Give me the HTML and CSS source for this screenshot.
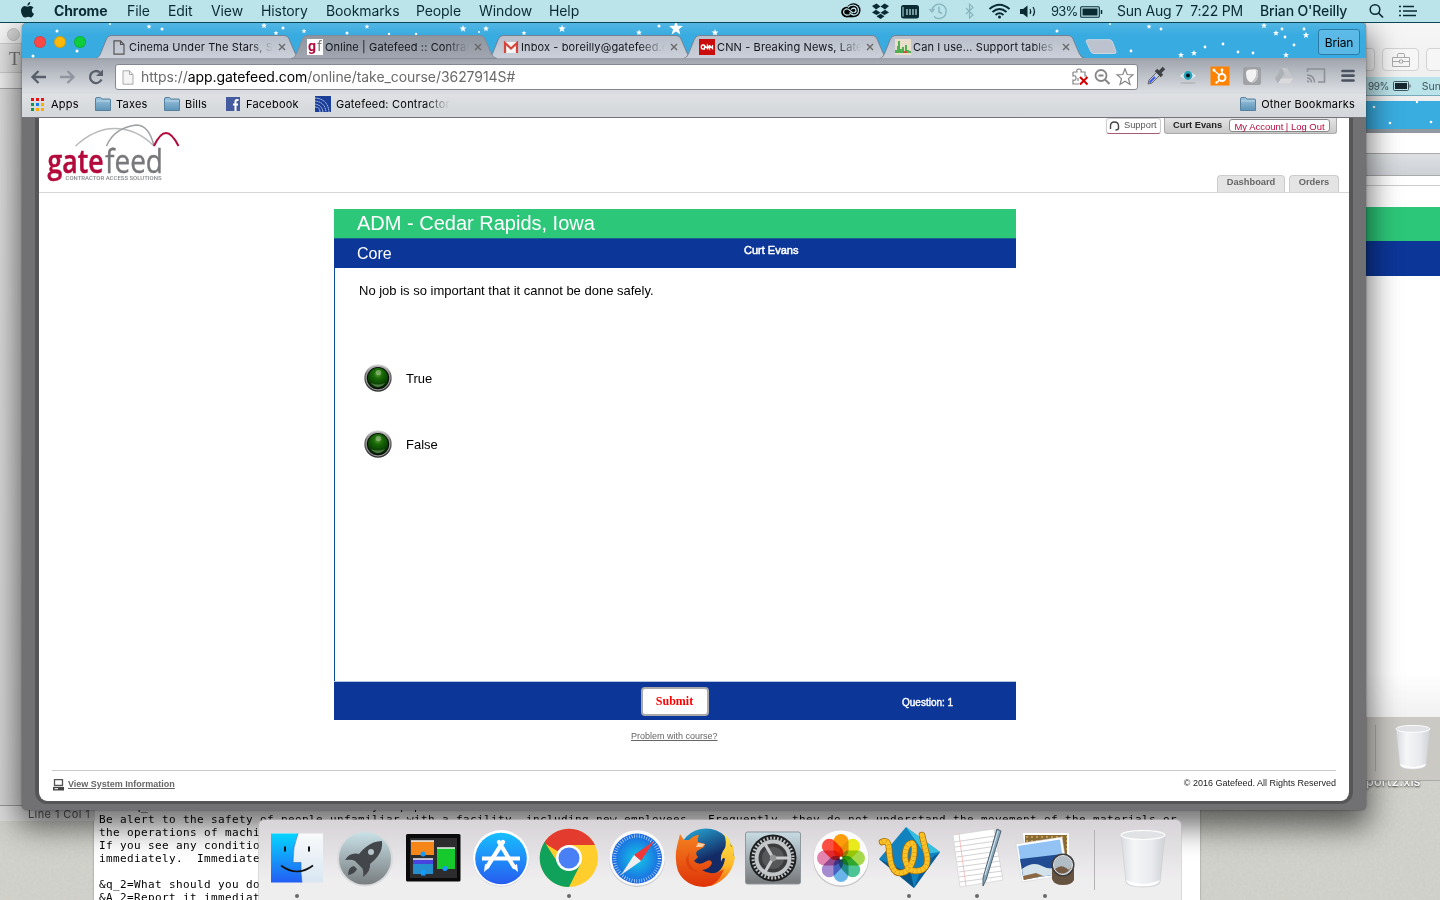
FILE: index.html
```html
<!DOCTYPE html>
<html lang="en">
<head>
<meta charset="utf-8">
<title>Online | Gatefeed :: Contractor Access Solutions</title>
<link rel="stylesheet" href="styles.css">
</head>
<body>
<svg width="0" height="0" class="defs">
  <defs>
    <path id="star" d="M0-5 1.3-1.6 5-1.4 2.1.9 3.1 4.6 0 2.5-3.1 4.6-2.1.9-5-1.4-1.3-1.6Z" fill="#fff"/>
    <linearGradient id="tabg" x2="0" y2="1"><stop stop-color="#b9bfca"/><stop offset="1" stop-color="#cbd0da"/></linearGradient>
    <linearGradient id="taba" x2="0" y2="1"><stop stop-color="#8f959f"/><stop offset="1" stop-color="#a1a6b0"/></linearGradient>
    <linearGradient id="fold" x2="0" y2="1"><stop stop-color="#9fc5dd"/><stop offset="1" stop-color="#5d94b8"/></linearGradient>
    <linearGradient id="cup" x2="1" y2="0"><stop stop-color="#d9dce0"/><stop offset=".3" stop-color="#f5f6f8"/><stop offset=".7" stop-color="#e8eaed"/><stop offset="1" stop-color="#cfd2d6"/></linearGradient>
    <linearGradient id="ring" x2="0" y2="1"><stop stop-color="#e2e2e2"/><stop offset=".35" stop-color="#6c6c6c"/><stop offset="1" stop-color="#303431"/></linearGradient>
    <radialGradient id="led" cx=".5" cy=".3" r=".7"><stop stop-color="#5fa03f"/><stop offset=".3" stop-color="#1b6d08"/><stop offset=".7" stop-color="#0b4603"/><stop offset="1" stop-color="#042600"/></radialGradient>
    <filter id="grain"><feTurbulence type="fractalNoise" baseFrequency=".35" numOctaves="3" seed="4"/><feColorMatrix values="0 0 0 0 .35 0 0 0 0 .34 0 0 0 0 .3 .5 0 0 0 -.12"/></filter>
    <symbol id="tab" viewBox="0 0 210 24"><path d="M0 23.500C4 23 5 20 7 15L11 5Q12.500.5 16 .5H189Q193 .5 194.500 5L200 18Q202 23 206 23.500Z"/></symbol>
    <symbol id="folder" viewBox="0 0 16 14"><path d="M.5 2Q.5.5 2 .5H5.500L7 2H14.500Q15.500 2 15.500 3V13.500H.5Z" fill="url(#fold)" stroke="#55819f"/><path d="M1 4H15" stroke="#b8d6e8"/></symbol>
    <symbol id="x" viewBox="0 0 8 8"><path d="M1 1 7 7M7 1 1 7" stroke="#666" stroke-width="1.300"/></symbol>
    <symbol id="doc" viewBox="0 0 12 15"><path d="M1 .8H7.500L11 4.500V14.200H1ZM7.500.8V4.500H11" fill="none" stroke="#555" stroke-width="1.200"/></symbol>
    <symbol id="bin" viewBox="0 0 46 58"><path d="M1 4 6 52Q7 57 23 57T40 52L45 4Z" fill="url(#cup)" stroke="#c7c9cd" stroke-width=".6"/><path d="M6 50Q8 56 23 56T40 50Q30 54 23 54T6 50Z" fill="#fff"/><ellipse cx="23" cy="5" rx="22" ry="4.500" fill="#e0e2e5" stroke="#fff" stroke-width="1.200"/></symbol>
    <symbol id="ledbtn" viewBox="0 0 28 28"><circle cx="14" cy="14" r="13.700" fill="url(#ring)"/><circle cx="14" cy="14" r="12" fill="none" stroke="#a5a5a5" stroke-width=".9"/><circle cx="14" cy="14" r="11" fill="#020802"/><circle cx="14" cy="14" r="10.200" fill="url(#led)"/><path d="M7 19Q14 22 21 19Q18 23 14 23T7 19Z" fill="#5f8557" opacity=".8"/><circle cx="14.500" cy="8.500" r="2.800" fill="#c2d8b8" opacity=".4"/></symbol>
  </defs>
</svg>

<div class="desktop">
  <svg class="texture" width="1440" height="900"><rect width="1440" height="900" filter="url(#grain)"/></svg>

  <div class="textwin"><pre>     q_                                y   p p
Be alert to the safety of people unfamiliar with a facility, including new employees.  Frequently, they do not understand the movement of the materials or
the operations of machi
If you see any conditio
immediately.  Immediate

&amp;q_2=What should you do
&amp;A_2=Report it immediat</pre></div>

  <div class="leftwin">
    <div class="lw-title"><i></i></div>
    <div class="lw-tools">T</div>
    <div class="lw-rule"></div>
    <div class="lw-body"></div>
    <div class="lw-status">Line 1 Col 1</div>
  </div>

  <div class="filelabel">port2.xls</div>
  <div class="rightwin">
    <div class="rw-tools"><span class="rw-btn cut"></span><span class="rw-btn"><svg width="18" height="14" viewBox="0 0 18 14" fill="none" stroke="#aaa"><path d="M.5 4.500H17.500V13.500H.5ZM5.500 4V1.500Q5.500.5 7 .5H11Q12.500.5 12.500 1.500V4M.5 8.500H7M11 8.500H17.500M7.500 7H10.500V10H7.500Z"/></svg></span><span class="rw-btn"></span></div>
    <div class="rw-menu"><span>99%</span><svg width="18" height="10" viewBox="0 0 18 10"><rect x=".5" y=".5" width="15" height="9" rx="1" fill="none" stroke="#41565c"/><path d="M2 2H14V8H2Z" fill="#182a30"/><path d="M17 3.500V6.500" stroke="#41565c"/></svg><span>Sun</span></div>
    <div class="rw-gap"></div>
    <div class="rw-sky"><svg width="74" height="27"><g fill="#fff"><circle cx="8" cy="6" r="1.300"/><circle cx="24" cy="22" r="1.300"/><circle cx="65" cy="21" r="1.300"/><circle cx="51" cy="1" r="1.200"/></g></svg></div>
    <div class="rw-white"></div>
    <div class="rw-grey"></div>
    <div class="rw-line"></div>
    <div class="rw-space"></div>
    <div class="rw-green"></div>
    <div class="rw-blue"></div>
    <div class="rw-page"></div>
    <div class="rw-dock"><i></i><svg width="36" height="45"><use href="#bin"/></svg></div>
  </div>

  <main class="browser">
    <div class="titlebar">
      <svg class="sky" width="1344" height="35">
        <g><use href="#star" transform="translate(127,3.500) scale(.5)"/><use href="#star" transform="translate(242,2.500) scale(.6)"/><use href="#star" transform="translate(254,10) scale(.5)"/><use href="#star" transform="translate(282,8) scale(.5)"/><use href="#star" transform="translate(345,3.500) scale(.5)"/><use href="#star" transform="translate(441,5.500) scale(.7)"/><use href="#star" transform="translate(464,5.500) scale(.6)"/><use href="#star" transform="translate(502,10) scale(.5)"/><use href="#star" transform="translate(540,5.500) scale(.75)"/><use href="#star" transform="translate(617,9.500) scale(.6)"/><use href="#star" transform="translate(654,5) scale(1.400)"/><use href="#star" transform="translate(693,9.500) scale(.7)"/><use href="#star" transform="translate(1127,3.500) scale(.5)"/><use href="#star" transform="translate(1159,32) scale(.6)"/><use href="#star" transform="translate(1172,30) scale(.6)"/><use href="#star" transform="translate(1242,2.500) scale(.6)"/><use href="#star" transform="translate(1254,10) scale(.6)"/><use href="#star" transform="translate(1264,32) scale(.6)"/><use href="#star" transform="translate(1284,12) scale(.65)"/></g>
        <g fill="#fff"><circle cx="35" cy="8" r="1.500"/><circle cx="11" cy="33" r="1.500"/><circle cx="55" cy="28" r="1.500"/><circle cx="88" cy="1" r="1"/><circle cx="140" cy="6" r="1.500"/><circle cx="261" cy="5" r="1.500"/><circle cx="325" cy="10" r="1.500"/><circle cx="367" cy="11" r="1.200"/><circle cx="394" cy="11" r="1.200"/><circle cx="457" cy="9" r="1"/><circle cx="637" cy="3" r="1.500"/><circle cx="1035" cy="8" r="1.500"/><circle cx="1088" cy="1" r="1"/><circle cx="1139" cy="6" r="1.400"/><circle cx="1109" cy="28" r="1.400"/><circle cx="1183" cy="24" r="1.400"/><circle cx="1201" cy="21" r="1.400"/><circle cx="1216" cy="29" r="1.400"/><circle cx="1231" cy="30" r="1.400"/><circle cx="1260" cy="6" r="1.400"/><circle cx="1263" cy="14" r="1.400"/><circle cx="1272" cy="22" r="1.400"/><circle cx="1282" cy="6" r="1.400"/></g>
      </svg>
      <div class="lights"><i class="red"></i><i class="yellow"></i><i class="green"></i></div>
      <div class="tabs">
        <div class="tab"><svg class="shape"><use href="#tab"/></svg><svg class="fav" width="16" height="15" viewBox="0 0 16 15"><use href="#doc" width="12" height="15" x="2"/></svg><span>Cinema Under The Stars, S</span><svg class="cl"><use href="#x"/></svg></div>
        <div class="tab active"><svg class="shape"><use href="#tab"/></svg><svg class="fav" width="16" height="16"><path d="M0 0H16V16H0Z" fill="#fff"/><text x="1" y="12" font-size="14" font-weight="700" fill="#b3093b">g</text><text x="10" y="12" font-size="14" fill="#777">f</text></svg><span>Online | Gatefeed :: Contrac</span><svg class="cl"><use href="#x"/></svg></div>
        <div class="tab"><svg class="shape"><use href="#tab"/></svg><svg class="fav" width="16" height="16"><path d="M1 3H15V14H1Z" fill="#f4f4f4"/><path d="M2 14V4L8 9.500 14 4V14" fill="none" stroke="#d54539" stroke-width="2.200"/></svg><span>Inbox - boreilly@gatefeed.c</span><svg class="cl"><use href="#x"/></svg></div>
        <div class="tab"><svg class="shape"><use href="#tab"/></svg><svg class="fav" width="16" height="16"><path d="M0 0H16V16H0Z" fill="#cb0c0c"/><path d="M5.500 6H4Q2.300 6 2.300 8T4 10H5.500V6.500L8.500 9.500V6.500L10.500 9.500V6M10.500 6.500 13.500 9.500V6" fill="none" stroke="#fff" stroke-width="1.300"/></svg><span>CNN - Breaking News, Late</span><svg class="cl"><use href="#x"/></svg></div>
        <div class="tab"><svg class="shape"><use href="#tab"/></svg><svg class="fav" width="16" height="16"><path d="M0 0H16V16H0Z" fill="#e9dfcc"/><path d="M0 14V11H2V7H3V2H5V10H7V8H9V12H10V6H12V11H14V12H16V14Z" fill="#4fb052"/><path d="M8 12H12V14H8Z" fill="#c0563c"/></svg><span>Can I use... Support tables</span><svg class="cl"><use href="#x"/></svg></div>
      </div>
      <svg class="newtab" width="32" height="16"><path d="M3 .7H24Q26.500.7 27.500 3L31 12.500Q31.500 14.500 29.500 14.500H9Q6.500 14.500 5.500 12L1.200 2.500Q.8.7 3 .7Z" fill="#bcc3ce" stroke="#ccd5df"/></svg>
      <div class="profile">Brian</div>
    </div>
    <div class="toolbar">
      <svg class="nav" width="82" height="18" viewBox="0 0 82 18" fill="none" stroke-width="2.300"><path d="M16 9H3M8.500 3 2.500 9 8.500 15" stroke="#59606c"/><path d="M30 9H43M37.500 3 43.500 9 37.500 15" stroke="#90969f"/><path d="M70 4.500A6 6 0 1 0 71.500 11.500" stroke="#59606c"/><path d="M73 1.500V8H66Z" fill="#59606c"/></svg>
      <div class="omnibox">
        <svg width="12" height="15" viewBox="0 0 12 15"><path d="M1 .8H7.500L11 4.500V14.200H1ZM7.500.8V4.500H11" fill="#f5f5f5" stroke="#aaa"/></svg>
        <span class="url"><span>https://</span><b>app.gatefeed.com</b><span>/online/take_course/3627914S#</span></span>
        <svg class="omni" width="62" height="18" viewBox="0 0 62 18" fill="none" stroke="#858585" stroke-width="1.200"><path d="M1 4H5Q4 1 7 1T9 4H13V8H15M1 4V8Q4 7 4 10T1 12V16H7M6 10V13"/><path d="M8 9 15.500 16.500M15.500 9 8 16.500" stroke="#d40000" stroke-width="2"/><circle cx="29" cy="7.500" r="5.500" stroke-width="1.800"/><path d="M33 11.500 37.500 16M26.500 7.500H31.500" stroke-width="2"/><path d="M53 .8 55.200 6.500 61 6.800 56.500 10.600 58 16.500 53 13.200 48 16.500 49.500 10.600 45 6.800 50.800 6.500Z"/></svg>
      </div>
      <div class="exts">
        <svg width="20" height="20" viewBox="0 0 20 20"><path d="M2 18 3 14 11 6 14 9 6 17Z" fill="#c5cede" stroke="#666"/><path d="M3.500 16.500 9 11" stroke="#3c59e8" stroke-width="2"/><path d="M10 4 16 10M13 7 18 2" stroke="#3e4146" stroke-width="3.500"/></svg>
        <svg width="20" height="20" viewBox="0 0 20 20"><path d="M2 10Q10 2 18 10Q10 17 2 10Z" fill="#dfe8ec"/><circle cx="10" cy="9.500" r="4.400" fill="#26a5ba"/><circle cx="10" cy="9.500" r="2" fill="#071017"/><ellipse cx="10" cy="17" rx="8" ry="1" fill="#aaa" opacity=".6"/></svg>
        <svg width="20" height="20" viewBox="0 0 20 20"><path d="M.5.5H19.500V19.500H.5Z" fill="#ff8200"/><circle cx="12" cy="11.500" r="3.500" fill="none" stroke="#fff" stroke-width="2"/><path d="M9.500 9 4 4.500M12 8V4M9.500 14 7 16.500" stroke="#fff" stroke-width="1.500"/><circle cx="4" cy="4" r="1.500" fill="#fff"/><circle cx="12" cy="4" r="1.400" fill="#fff"/><circle cx="6.500" cy="16.500" r="1.200" fill="#fff"/></svg>
        <svg width="20" height="20" viewBox="0 0 20 20"><rect x="1" y="1" width="18" height="18" rx="2" fill="#a0a2a5"/><path d="M4 7Q4 3 10 3.500 16 2 16 7 16 16 10 16.500 4 16 4 7Z" fill="#f3f3f3"/><path d="M14 4Q16 11 9 16.500 17 16 16 6Z" fill="#c2c2c2"/></svg>
        <svg width="20" height="20" viewBox="0 0 20 20"><path d="M7.500 2H13L19 12.500H13Z" fill="#c4c6c9"/><path d="M7.500 2 1 12.500 4 17.500 10.500 7Z" fill="#adb0b4"/><path d="M7 12.500H19L16 17.500H4Z" fill="#d9dadb"/></svg>
        <svg width="20" height="20" viewBox="0 0 20 20" fill="none" stroke="#8d9095" stroke-width="1.600"><path d="M1.500 6V3H18.500V16H12M1 9Q8 9 8.500 16.500M1 12Q5 12 5.500 16.500M1 15Q2.500 15 2.500 16.500"/></svg>
        <svg width="20" height="20" viewBox="0 0 20 20"><path d="M4.500 5H15.500M4.500 9.700H15.500M4.500 14.500H15.500" stroke="#4a5260" stroke-width="2.700" stroke-linecap="round"/></svg>
      </div>
    </div>
    <div class="bookmarks">
      <div class="bm apps"><svg width="13" height="13"><g><path d="M0 0H3V3H0ZM5 0H8V3H5ZM10 0H13V3H10Z" fill="#f00d0d"/><path d="M0 5H3V8H0ZM0 10H3V13H0Z" fill="#11994b"/><path d="M5 5H8V8H5Z" fill="#157cea"/><path d="M10 5H13V8H10ZM5 10H8V13H5ZM10 10H13V13H10Z" fill="#ffac00"/></g></svg><span>Apps</span></div>
      <div class="bm taxes"><svg width="16" height="14"><use href="#folder"/></svg><span>Taxes</span></div>
      <div class="bm bills"><svg width="16" height="14"><use href="#folder"/></svg><span>Bills</span></div>
      <div class="bm fb"><svg width="14" height="14"><path d="M0 0H14V14H0Z" fill="#455ba0"/><path d="M12.500 3H11Q9.500 3 9.500 4.700V14M7 7.500H12" stroke="#fff" stroke-width="2" fill="none"/></svg><span>Facebook</span></div>
      <div class="bm gf"><svg width="16" height="16"><path d="M0 0H16V16H0Z" fill="#1b3f99"/><g fill="none" stroke="#c5d3ef" stroke-dasharray="1.500 .6"><path d="M0 2Q13 3 14 16M0 5Q10 6 11 16M0 8Q7 9 8 16M0 11Q5 11 5 16"/></g></svg><span>Gatefeed: Contractor</span></div>
      <div class="bm other"><svg width="16" height="14"><use href="#folder"/></svg><span>Other Bookmarks</span></div>
    </div>
    <div class="frame">
      <div class="page">
        <header class="site">
          <svg class="logo" width="136" height="62" viewBox="0 0 136 62"><g fill="none" stroke-width="1.500"><path d="M27.500 27Q47 9 68 9.500T106 27" stroke="#b9babc"/><path d="M58.500 27Q66 9 88 6 101 6 106 27" stroke="#9fa1a4"/><path d="M106 27Q112 14 118 14T130.500 27" stroke="#b3093b" stroke-width="2"/></g><text class="lg" x="-.5" y="54" textLength="56" lengthAdjust="spacingAndGlyphs" fill="#b3093b">gate</text><text class="lf" x="57" y="54" textLength="58" lengthAdjust="spacingAndGlyphs" fill="#77787b">feed</text><text class="ls" x="17.500" y="61.300" textLength="96" lengthAdjust="spacingAndGlyphs" fill="#88898b">CONTRACTOR ACCESS SOLUTIONS</text></svg>
          <div class="siteright">
            <div class="account">
              <div class="support"><svg width="11" height="10" viewBox="0 0 11 10"><path d="M1.500 7V5Q1.500 1 5.500 1T9.500 5V7Q9.500 9 6.500 9M1.500 5V8M9.500 5V8" fill="none" stroke="#444" stroke-width="1.400"/></svg><span>Support</span></div>
              <div class="user"><b>Curt Evans</b><span class="links">My Account | Log Out</span></div>
            </div>
            <nav class="sitenav"><span>Dashboard</span><span>Orders</span></nav>
          </div>
        </header>
        <section class="course">
          <h1>ADM - Cedar Rapids, Iowa</h1>
          <div class="lesson"><h2>Core</h2><span>Curt Evans</span></div>
          <div class="question">
            <p>No job is so important that it cannot be done safely.</p>
            <div class="answer"><svg width="28" height="28"><use href="#ledbtn"/></svg><span>True</span></div>
            <div class="answer"><svg width="28" height="28"><use href="#ledbtn"/></svg><span>False</span></div>
          </div>
          <div class="actions"><button>Submit</button><span>Question: 1</span></div>
        </section>
        <div class="problem"><a>Problem with course?</a></div>
        <footer><span class="sys"><svg width="11" height="12" viewBox="0 0 11 12"><path d="M1.500.7H9.500V6.500H1.500Z" fill="none" stroke="#555" stroke-width="1.300"/><path d="M0 8H11V11.500H0Z" fill="#444"/><path d="M1.500 9.700H5" stroke="#fff"/></svg><a>View System Information</a></span><span class="copy">© 2016 Gatefeed. All Rights Reserved</span></footer>
      </div>
    </div>
  </main>

  <div class="menubar">
    <svg class="apple" width="15" height="16" viewBox="0 0 15 16"><path d="M10.200 0Q10.400 2.800 7.400 3.700 7.200 1 10.200 0ZM7.500 4.700Q8.500 4.600 9.500 4.100 12 3.600 13.500 5.600 11.500 7 11.800 9T14 11.700Q12.500 15.500 10.600 15.500 9 14.700 7.500 14.900T5 15.500Q3 15.500 1.700 12 .2 8 1.900 5.700 3.500 3.500 5.800 4.300Q6.800 4.700 7.500 4.700Z" fill="#0b2b33"/></svg>
    <div class="menus"><b>Chrome</b><span>File</span><span>Edit</span><span>View</span><span>History</span><span>Bookmarks</span><span>People</span><span>Window</span><span>Help</span></div>
    <div class="status">
      <svg width="265" height="20" viewBox="0 0 265 20" fill="none" stroke="#0b2b33" stroke-width="1.400">
        <g><circle cx="13.500" cy="9.300" r="7" fill="#000" stroke="none"/><circle cx="6.500" cy="11" r="5.300" fill="#000" stroke="none"/><path d="M6 6H13V16.300H6Z" fill="#000" stroke="none"/><g stroke="#bbe3ea" stroke-width="1.300"><path d="M10 13.500Q8 14.500 6 14 3.500 13 3.500 11T6 8Q8 7.500 10 9.500L13 12M8 6.500Q10 4 13.500 4.200 18.500 5 18.500 9.500 18 14 13.500 14 11 13.500 9.500 11.500M11 8.500Q12.500 7 14 7 16 7.500 16 9.500T13.500 11.500"/></g></g>
        <path d="M32 5 36.500 2.500 40.500 5.500 36 8.500ZM49 5 44.500 2.500 40.500 5.500 45 8.500ZM32 11.500 36 8.700 40.500 11.800 36.500 14ZM49 11.500 45 8.700 40.500 11.800 44.500 14ZM36.500 15.300 40.500 12.700 44.500 15.300 40.500 18Z" fill="#0b2b33" stroke="none"/>
        <rect x="61" y="4" width="18" height="13.500" rx="2.500" fill="#0b2b33" stroke="none"/><path d="M63 6V15.500" stroke="#bbe3ea" stroke-width="1"/><path d="M67 8V14M70 8V14M73 8V14M76 8V14" stroke="#bbe3ea" stroke-width="1.200"/>
        <g stroke="#86b4bd"><path d="M92 9A7.200 7.200 0 1 1 94 15.500M89.500 8 92 11 94.500 8M99 5.500V11L102 12.500"/><path d="M126 7 133 14 129.500 17V3L133 6.500 126 13" stroke-width="1.100"/></g>
        <path d="M149.500 8Q159.500-.5 169.500 8M152.500 11Q159.500 5 166.500 11M155.500 14Q159.500 10.500 163.500 14" stroke-width="2"/><circle cx="159.500" cy="16" r="1.500" fill="#0b2b33" stroke="none"/>
        <path d="M180 8H183L187.500 4.500V16.500L183 13H180Z" fill="#0b2b33" stroke="none"/><path d="M190 8Q191.500 10.500 190 13M193 6Q196 10.500 193 15" stroke-width="1.200"/>
        <text x="211" y="15" class="pct">93%</text>
        <rect x="240.700" y="5.700" width="18.600" height="10.600" rx="1" stroke-width="1.100"/><path d="M242.500 7.500H257.500V14.500H242.500Z" fill="#0b2b33" stroke="none"/><path d="M261.500 9V13" stroke-width="1.500"/>
      </svg>
      <span class="clock">Sun Aug 7&nbsp; 7:22 PM</span><span class="name">Brian O'Reilly</span>
      <svg class="srch" width="50" height="16" viewBox="0 0 50 16" fill="none" stroke="#0b2b33"><circle cx="6" cy="6.500" r="4.800" stroke-width="1.500"/><path d="M9.500 10 14 14.500" stroke-width="1.700"/><path d="M34 3.500H45M34 8H48M34 12.500H47" stroke-width="1.600"/><path d="M30 3.500H32M30 8H32M30 12.500H32" stroke-width="1.600"/></svg>
    </div>
  </div>

  <div class="dock">
    <!-- Finder -->
    <svg class="ic" viewBox="0 0 68 80"><defs><linearGradient id="fi" x2="0" y2="1"><stop stop-color="#05d5ff"/><stop offset="1" stop-color="#235ef4"/></linearGradient><linearGradient id="fw" x2="0" y2="1"><stop stop-color="#f9fafb"/><stop offset="1" stop-color="#d8e6f2"/></linearGradient></defs><rect x="8" y="13.500" width="52" height="49" rx="1" fill="url(#fw)"/><path d="M8 13.500H35Q29.500 27 30 42.500H38Q37.500 53 39 62.500H8Z" fill="url(#fi)"/><path d="M35 13.500Q29.500 27 30 42.500H38Q37.500 53 39 62.500" fill="none" stroke="#2c62a8" stroke-width=".6"/><path d="M22 26.500V31.500M46 26.500V31.500" stroke="#111" stroke-width="2"/><path d="M18 45.500Q34 57.500 50 45.500" fill="none" stroke="#111" stroke-width="1.600"/><circle cx="34" cy="76" r="2" fill="#68676a"/></svg>
    <!-- Launchpad -->
    <svg class="ic" viewBox="0 0 68 80"><defs><linearGradient id="lp" x2="0" y2="1"><stop stop-color="#c9e2e9"/><stop offset="1" stop-color="#777b7d"/></linearGradient></defs><circle cx="34" cy="38.500" r="27" fill="url(#lp)" stroke="#d8dadc" stroke-width="2"/><path d="M51 21Q42 21 35 27 31 30 28 34 19 32 14 40 21 39 24 41L31 48Q33 51 32 57 40 51 39 44 44 40 47 36 52 29 51 21Z" fill="#43464a"/><path d="M23 46Q17 47 17 55 24 54 26 49Z" fill="#43464a"/><circle cx="40" cy="32" r="3" fill="#b7c4c9"/></svg>
    <!-- Mission Control -->
    <svg class="ic" viewBox="0 0 68 80"><rect x="7" y="14" width="54.500" height="47.500" rx="1.500" fill="#0a0a0a"/><path d="M11 18H58V58H11Z" fill="#2c2c2e"/><path d="M12 21H35V35H12Z" fill="#f68617"/><path d="M38 28H56V49H38Z" fill="#16c92d"/><path d="M14 39H34V54H14Z" fill="#258fd0"/><path d="M14 39H34V44H14Z" fill="#4644dd"/><path d="M12 21H35M38 28H56M14 39H34" stroke="#eee" stroke-width="1.500"/><g fill="#149bff"><circle cx="24" cy="34" r="2.500"/><circle cx="46" cy="48.500" r="2.500"/><path d="M22 50H26.500V55.500H22Z"/></g></svg>
    <!-- App Store -->
    <svg class="ic" viewBox="0 0 68 80"><defs><linearGradient id="as" x2="0" y2="1"><stop stop-color="#18bfff"/><stop offset="1" stop-color="#275cf0"/></linearGradient></defs><circle cx="34" cy="38.500" r="28" fill="#bfc4cb"/><circle cx="34" cy="38" r="28" fill="#fff"/><circle cx="34" cy="38.500" r="25.800" fill="url(#as)"/><path d="M15 38.500H53" stroke="#fff" stroke-width="4"/><path d="M36 22 20 47M32 22 47 47" stroke="#fff" stroke-width="4.200" stroke-linecap="round"/><path d="M18 44 22.500 47 17 52ZM45 47 50 44 51 52Z" fill="#fff"/></svg>
    <!-- Chrome -->
    <svg class="ic" viewBox="0 0 68 80"><circle cx="34" cy="38" r="29" fill="#ffce2c"/><path d="M34 38 9 23A29 29 0 0 1 60 25H34Z" fill="#e33b2e"/><path d="M9.500 22A29 29 0 0 0 34 67L45 45 34 38 23 43Z" fill="#10a15a"/><circle cx="34" cy="38" r="13" fill="#fff"/><circle cx="34" cy="38" r="10.500" fill="#4a80f5"/><circle cx="34" cy="76" r="2" fill="#68676a"/></svg>
    <!-- Safari -->
    <svg class="ic" viewBox="0 0 68 80"><defs><radialGradient id="sf"><stop stop-color="#13c9e8"/><stop offset="1" stop-color="#1b65df"/></radialGradient></defs><circle cx="34" cy="39" r="28" fill="#c5c7cc"/><circle cx="34" cy="38" r="27.800" fill="#f9f9fa"/><circle cx="34" cy="38.500" r="25" fill="url(#sf)"/><circle cx="34" cy="38.500" r="22.500" fill="none" stroke="#d6eefd" stroke-width="3.500" stroke-dasharray=".6 1.900"/><path d="M51 21 38 41 31 35Z" fill="#f03739"/><path d="M18 55 31 35 38 41Z" fill="#eceef1"/></svg>
    <!-- Firefox -->
    <svg class="ic" viewBox="0 0 68 80"><defs><linearGradient id="ff" x2=".4" y2="1"><stop stop-color="#28b4e0"/><stop offset=".65" stop-color="#142a65"/></linearGradient><linearGradient id="fx" x2="0" y2="1"><stop stop-color="#f58220"/><stop offset="1" stop-color="#df3208"/></linearGradient><linearGradient id="ft" x2="0" y2="1"><stop stop-color="#ffe44a"/><stop offset=".6" stop-color="#fdb92a"/><stop offset="1" stop-color="#f0630e"/></linearGradient></defs><circle cx="35" cy="36" r="27.500" fill="url(#ff)"/><path d="M53 14Q60 19 60 27L62 25Q64 31 62 35L64 37Q61 58 40 66 24 66 24 52 50 61 54 39 52 36 50 42 49 34 54 28 56 22 53 14Z" fill="url(#ft)"/><path d="M6 26 9 14 13 20 18 20Q23 15 28 15 26 19 27 22L34 24 33 27 26 31Q24 34 27 37L23 41Q28 46 34 42T41 43Q39 49 31 50 41 57 53 49 47 66 33 67 14 66 7 51 3 38 6 26Z" fill="url(#fx)"/><path d="M27 23 34 24 31 27 25 27Z" fill="#fbd0a5"/><path d="M19 31Q14 45 27 52 15 51 15 39Z" fill="#d53b0c" opacity=".6"/></svg>
    <!-- System Preferences -->
    <svg class="ic" viewBox="0 0 68 80"><defs><linearGradient id="sp" x2="0" y2="1"><stop stop-color="#c8dce4"/><stop offset="1" stop-color="#77797b"/></linearGradient></defs><rect x="6.500" y="12" width="55" height="52" rx="2" fill="url(#sp)" stroke="#8e979b"/><circle cx="34" cy="38" r="23.500" fill="#1e2022"/><circle cx="34" cy="38" r="20" fill="none" stroke="#c1c4c6" stroke-width="3" stroke-dasharray="1.700 1.790"/><circle cx="34" cy="38" r="16.500" fill="#3a3c3e" stroke="#c3c6c8" stroke-width="4"/><circle cx="34" cy="38" r="11" fill="#555759"/><path d="M34 38H50M34 38 26 24M34 38 26 52" stroke="#c8cacc" stroke-width="3"/><circle cx="34" cy="38" r="3.200" fill="#929597"/></svg>
    <!-- Photos -->
    <svg class="ic" viewBox="0 0 68 80"><circle cx="34" cy="39" r="28" fill="#c6c6c9"/><circle cx="34" cy="38" r="27.500" fill="#fbfbfb"/><g class="petals"><rect x="26.500" y="14" width="15" height="24" rx="7.500" fill="#fe9d0b"/><rect x="26.500" y="14" width="15" height="24" rx="7.500" fill="#e9ea1c" transform="rotate(45 34 38)"/><rect x="26.500" y="14" width="15" height="24" rx="7.500" fill="#a5d84b" transform="rotate(90 34 38)"/><rect x="26.500" y="14" width="15" height="24" rx="7.500" fill="#4cc493" transform="rotate(135 34 38)"/><rect x="26.500" y="14" width="15" height="24" rx="7.500" fill="#69b4e8" transform="rotate(180 34 38)"/><rect x="26.500" y="14" width="15" height="24" rx="7.500" fill="#a58bd0" transform="rotate(225 34 38)"/><rect x="26.500" y="14" width="15" height="24" rx="7.500" fill="#e383b0" transform="rotate(270 34 38)"/><rect x="26.500" y="14" width="15" height="24" rx="7.500" fill="#fb4f43" transform="rotate(315 34 38)"/></g><circle cx="34" cy="38" r="1.500" fill="#fff"/></svg>
    <!-- TextWrangler -->
    <svg class="ic" viewBox="0 0 68 80"><path d="M31 7 65 32 39 68 4 39Z" fill="#1182bd"/><path d="M31 7 65 32 50 34Z" fill="#36c0e0"/><path d="M4 39 39 68 36 54Z" fill="#075487"/><path d="M39 68 65 32 48 44Z" fill="#0b5d9b"/><g fill="none" stroke-linecap="round" stroke-linejoin="round"><path d="M7 22Q13 19 14 28 15 53 25 53 34 53 38 40 41 25 37 23 30 24 30 38 32 52 42 51 54 50 52 36L47 15" stroke="#a56a08" stroke-width="6.500"/><path d="M7 22Q13 19 14 28 15 53 25 53 34 53 38 40 41 25 37 23 30 24 30 38 32 52 42 51 54 50 52 36L47 15" stroke="#fbc226" stroke-width="5"/><path d="M7 22Q13 19 14 28 15 53 25 53 34 53 38 40 41 25 37 23 30 24 30 38 32 52 42 51 54 50 52 36L47 15" stroke="#d99a18" stroke-width="4.500" stroke-linecap="butt" stroke-dasharray=".6 3.400"/></g><circle cx="34" cy="76" r="2" fill="#68676a"/></svg>
    <!-- TextEdit -->
    <svg class="ic" viewBox="0 0 68 80"><path d="M10 15 51 9 60 60 17 67Z" fill="#fff" stroke="#ccc" stroke-width=".6"/><path d="M11 22 52 16M12 27 53 21M13 32 54 26M14 37 55 31M14 42 56 36M15 47 57 41M16 52 58 46M16 57 59 51M17 62 60 56" stroke="#c7c7cc" stroke-width=".8"/><path d="M16 14 23 66" stroke="#f2a9a9" stroke-width=".7"/><path d="M54 9 58 11 43 60 40 66 40 58Z" fill="#8ba9bd" stroke="#4e626f"/><path d="M55 11 42 55" stroke="#dceaf2"/><circle cx="34" cy="76" r="2" fill="#68676a"/></svg>
    <!-- Preview -->
    <svg class="ic" viewBox="0 0 68 80"><path d="M12 13H58V48H16Z" fill="#fff"/><path d="M14 15H56V46H14Z" fill="#8a6a34"/><path d="M15 17H56M15 21H56M50 25H56M50 29H56" stroke="#c39a51" stroke-width="2" stroke-dasharray="2 3"/><path d="M5 24 51 17 57 55 11 62Z" fill="#fff" stroke="#ccc" stroke-width=".5"/><path d="M7 26 49 19.500 54 53 12.500 59.500Z" fill="#93c3f5"/><path d="M9 39 51.500 34 54 53 12.500 59.500Z" fill="#214b93"/><path d="M11 49Q22 41 31 46T53 46L54 53 12.500 59.500Z" fill="#d3e2ea"/><path d="M12 56 25 53 32 56 13 60Z" fill="#8a6843"/><path d="M41 46H63V60Q61 65 52 65T41 59Z" fill="#66533f"/><circle cx="52" cy="45" r="11.500" fill="#3d3d3d"/><circle cx="52" cy="45" r="9.500" fill="#b2bcc5" stroke="#e2e5e8"/><path d="M44 49Q50 44 55 48T60 47Q57 53 52 53.500T44 49Z" fill="#765b44"/><circle cx="34" cy="76" r="2" fill="#68676a"/></svg>
    <i class="dsep"></i>
    <svg class="trash" width="46" height="58"><use href="#bin"/></svg>
  </div>
</div>
</body>
</html>
```
FILE: styles.css
```css
* { box-sizing: border-box; }
body { margin: 0; font-family: "Liberation Sans", Arial, sans-serif; }
svg { display: block; flex: none; }
i { display: block; flex: none; }
.defs { position: absolute; }
.desktop { position: relative; width: 1440px; height: 900px; overflow: hidden; background: #d3d3cd; }
.texture { position: absolute; opacity: .35; }

/* menu bar */
.menubar { position: absolute; left: 0; top: 0; width: 1440px; height: 23px; display: flex; align-items: center; background: #bbe3ea; border-bottom: 1px solid #0b4656; font: 14px/22px Inter, sans-serif; color: #0b2b33; padding-left: 20px; }
.apple { margin-top: -3px; }
.menus { display: grid; grid-template-columns: 73px 41px 43px 50px 65px 90px 63px 70px 50px; margin-left: 19px; letter-spacing: -.1px; }
.menus > * { white-space: nowrap; }
.status { display: flex; align-items: center; position: absolute; left: 840px; top: 0; height: 22px; white-space: nowrap; }
.pct { font: 13px Inter, sans-serif; fill: #0b2b33; stroke: none; letter-spacing: -.8px; }
.clock { width: 143px; margin-left: 12px; letter-spacing: -.22px; }
.name { width: 109px; font-weight: 500; letter-spacing: -.15px; }

/* windows behind */
.leftwin { position: absolute; left: 0; top: 23px; width: 95px; height: 798px; display: flex; flex-direction: column; background: #dcdcdc; }
.lw-title { height: 21px; background: #f5f5f5; border-bottom: 1px solid #d0d0d0; padding: 5px 7px; }
.lw-title i { width: 13px; height: 13px; border-radius: 50%; background: #d5d5d5; border: 1px solid #c3c3c3; }
.lw-tools { height: 29px; background: #e4e4e4; font: 18px/30px "Liberation Serif", serif; color: #777; padding-left: 9px; border-bottom: 1px solid #ccc; }
.lw-rule { height: 16px; background: #f0f0f0; border-bottom: 1px solid #aaa; }
.lw-body { flex: 1; background: linear-gradient(#ddd, #d4d4d4); border-bottom: 1px solid #999; }
.lw-status { height: 15px; background: #ddd; font: 11px/17px Inter, sans-serif; color: #555; padding-left: 28px; letter-spacing: .4px; white-space: nowrap; }
.textwin { position: absolute; left: 94px; top: 790px; width: 1106px; height: 110px; background: #fff; padding: 10px 5px; box-shadow: 0 0 2px #888; overflow: hidden; }
.textwin pre { margin: 0; font: 11px/13px "DejaVu Sans Mono", monospace; letter-spacing: .378px; color: #000; }
.filelabel { position: absolute; left: 1366px; top: 774px; font: 500 12.500px/16px Inter, sans-serif; color: #fff; text-shadow: 0 1px 2px #333; letter-spacing: .2px; }
.rightwin { position: absolute; left: 1366px; top: 23px; width: 74px; height: 758px; background: #fff; display: flex; flex-direction: column; overflow: hidden; }
.rw-tools { height: 54px; background: linear-gradient(#f6f6f6, #f0f0f0); display: flex; gap: 7px; padding-top: 25px; margin-left: -28px; padding-left: 0; flex: none; }
.rw-btn { width: 37px; height: 23px; border: 1px solid #d3d3d3; border-radius: 4px; background: #f6f6f6; flex: none; display: grid; place-items: center; }
.rw-menu { height: 19px; background: #bbe3ea; display: flex; align-items: center; font: 10px/17px Inter, sans-serif; color: #41565c; padding-left: 2px; gap: 4px; border-bottom: 1px solid #7ab; }
.rw-menu span:first-child { letter-spacing: -.5px; }
.rw-menu span:last-child { margin-left: 7px; font-size: 10.500px; }
.rw-gap { height: 5px; background: #efefef; }
.rw-sky { height: 32px; background: #3aade0; border-bottom: 4px solid #9198a0; }
.rw-white { height: 20px; }
.rw-grey { height: 23px; background: linear-gradient(#dde0e3, #ced1d6); border: 1px solid #aaa; border-width: 1px 0; }
.rw-line { height: 10px; border-bottom: 1px solid #ccc; }
.rw-space { height: 21px; }
.rw-green { height: 34px; background: #2dc779; }
.rw-blue { height: 35px; background: #0c3698; }
.rw-page { flex: 1; background: linear-gradient(#fff 90%, #f1f1f1); }
.rw-dock { height: 64px; background: #cbc9c4; display: flex; padding: 8px 0 0 9px; gap: 19px; border-bottom: 1px solid #aaa; }
.rw-dock i { width: 1px; height: 46px; background: #aaa; }

/* browser chrome */
.browser { position: absolute; left: 22px; top: 23px; width: 1344px; height: 787px; border-radius: 5px; box-shadow: 0 13px 30px 4px rgba(0,0,0,.57), 0 0 2px rgba(0,0,0,.5); display: flex; flex-direction: column; background: #717174; }
.titlebar { height: 35px; background: linear-gradient(#52b6e4, #38abe0 35%); border-radius: 5px 5px 0 0; position: relative; display: flex; font: 11px Inter, sans-serif; }
.sky { position: absolute; left: 0; top: 0; overflow: hidden; }
.lights { display: flex; gap: 8px; padding: 13px 0 0 12px; width: 76px; position: relative; }
.lights i { width: 12px; height: 12px; border-radius: 50%; border: 1px solid #0002; }
.red { background: #fc4948; } .yellow { background: #fdb90a; } .green { background: #0fce3e; }
.tabs { display: flex; padding-top: 12px; position: relative; }
.tab { width: 196px; height: 23px; position: relative; display: flex; align-items: center; padding-left: 13px; white-space: nowrap; color: #10141a; }
.shape { position: absolute; left: -3px; top: 0; width: 210px; height: 24px; fill: url(#tabg); stroke: #737c8b; stroke-width: .9; }
.tab.active { z-index: 2; }
.active .shape { fill: url(#taba); stroke: #838994; }
.fav { position: relative; margin-top: 1px; }
.fav text { font-family: Roboto, sans-serif; }
.tab span { position: relative; width: 144px; margin-left: 2px; overflow: hidden; line-height: 18px; letter-spacing: .12px; -webkit-mask-image: linear-gradient(90deg, #000 83%, transparent); mask-image: linear-gradient(90deg, #000 83%, transparent); }
.cl { width: 8px; height: 8px; position: relative; margin-left: 5px; }
.newtab { margin: 16px 0 0 7px; position: relative; }
.profile { position: absolute; right: 6px; top: 6px; width: 42px; height: 26px; border: 1px solid #2c7ba6; border-radius: 3px; background: #6cc1eaa8; text-align: center; font-size: 12px; line-height: 26px; letter-spacing: -.2px; }
.toolbar { height: 36px; border-top: 2px solid #9da2ab; background: linear-gradient(#a2a7b0, #d8dbe0 90%); display: flex; padding-left: 8px; position: relative; }
.nav { margin-top: 8px; }
.omnibox { width: 1023px; height: 26px; margin: 4px 0 0 3px; background: #fff; border: 1px solid #828791; border-radius: 3px; display: flex; align-items: center; padding: 0 4px 0 6px; }
.url { font: 14px Inter, sans-serif; color: #6a6a6a; margin-left: 7px; white-space: nowrap; letter-spacing: -.06px; margin-top: -2px; }
.url b { font-weight: 400; color: #000; }
.omni { margin-left: auto; margin-right: -1px; }
.exts { display: flex; padding: 6px 0 0 8px; gap: 12px; }
.bookmarks { height: 24px; background: linear-gradient(#dfe1e4, #d3d6da); border-bottom: 1px solid #737479; display: flex; align-items: center; padding: 0 11px 3px 9px; font: 11px/18px Inter, sans-serif; }
.bm { display: flex; align-items: center; white-space: nowrap; gap: 5px; letter-spacing: .22px; }
.apps { width: 64px; gap: 7px; } .taxes { width: 69px; } .bills { width: 62px; } .fb { width: 89px; gap: 6px; }
.gf span { width: 114px; overflow: hidden; -webkit-mask-image: linear-gradient(90deg, #000 78%, transparent); mask-image: linear-gradient(90deg, #000 78%, transparent); }
.other { margin-left: auto; }
.frame { flex: 1; padding: 0 13px 6px; display: flex; }
.page { flex: 1; background: #fff; border: solid #565658; border-width: 0 4px 3px; border-radius: 0 0 12px 12px; display: flex; flex-direction: column; }

/* site */
.site { height: 75px; border-bottom: 1px solid #d6d6d6; display: flex; justify-content: space-between; padding: 0 11px 0 9px; }
.logo { margin-top: 1px; overflow: visible; }
.lg { font: 600 32px "Open Sans", sans-serif; stroke: #b3093b; stroke-width: .5; } .lf { font: 500 32px "Open Sans", sans-serif; stroke: #77787b; stroke-width: .4; } .ls { font: 500 5.500px Roboto, sans-serif; }
.siteright { display: flex; flex-direction: column; justify-content: space-between; align-items: flex-end; }
.account { display: flex; gap: 3px; font-size: 9px; margin-right: 1px; }
.support { width: 55px; height: 16px; border: 1px solid #ccc; border-bottom-color: #a55a72; border-radius: 3px; display: flex; align-items: center; gap: 4px; padding-left: 2px; color: #555; white-space: nowrap; }
.support span { font-size: 9.300px; margin-top: -2px; }
.user { width: 173px; height: 16px; background: linear-gradient(#e4e4e4, #c9c9c9); border: 1px solid #aaa; border-top: 0; border-radius: 0 0 3px 3px; display: flex; padding-left: 8px; line-height: 15px; white-space: nowrap; color: #222; }
.user b { width: 56px; font-size: 9.300px; }
.links { width: 101px; height: 13px; margin-top: 1px; border: 1px solid #888; border-radius: 3px; background: #fff; color: #b3093b; text-align: center; font-size: 9.450px; line-height: 13px; }
.sitenav { display: flex; gap: 4px; font: bold 9.300px/13px "Liberation Sans", sans-serif; color: #666; margin-right: -1px; }
.sitenav span { height: 17px; background: #e4e4e4; border: 1px solid #ccc; border-bottom: 0; border-radius: 4px 4px 0 0; width: 68px; text-align: center; }
.sitenav span + span { width: 50px; }
.course { width: 682px; height: 511px; margin: 16px 0 0 295px; display: flex; flex-direction: column; }
.course h1 { margin: 0; height: 29px; background: #2dc779; color: #fff; font: 20px/29px "Liberation Sans", sans-serif; padding-left: 23px; }
.lesson { height: 30px; background: #0c3698; border-top: 1px solid #17608e; color: #fff; display: flex; padding-left: 23px; }
.lesson h2 { margin: 0; width: 387px; font: 16px/29px "Liberation Sans", sans-serif; }
.lesson span { font-size: 11px; line-height: 22px; -webkit-text-stroke: .5px #fff; }
.question { flex: 1; border-left: 1px solid #0b4d98; padding: 15px 0 0 24px; font-size: 13px; line-height: 16px; }
.question p { margin: 0 0 65px; }
.answer { display: flex; align-items: center; gap: 14px; height: 28px; margin: 0 0 38px 5px; }
.answer svg { margin-top: -1px; }
.answer span { padding-top: 2px; }
.actions { height: 39px; background: #0c3698; border-top: 1px solid #b5c2de; padding: 5px 0 0 307px; display: flex; color: #fff; }
.actions button { width: 68px; height: 29px; padding: 0 1px 0 0; background: #fff; border: 2px solid #aaa; border-radius: 4px; font: bold 12px "Liberation Serif", serif; color: #f00; }
.actions span { font-size: 10px; line-height: 32px; margin-left: 193px; -webkit-text-stroke: .4px #fff; }
.problem { padding: 9px 0 0 592px; font-size: 9px; line-height: 14px; color: #666; height: 50px; }
.problem a, .sys a { text-decoration: underline; }
footer { margin: 0 13px; height: 30px; border-top: 1px solid #c8c8c8; display: flex; justify-content: space-between; font-size: 9px; line-height: 24px; color: #222; }
.sys { display: flex; align-items: center; height: 27px; gap: 4px; font-weight: bold; color: #666; padding-left: 1px; }
.sys a { margin-top: -2px; }

/* dock */
.dock { position: absolute; left: 259px; top: 820px; width: 922px; height: 80px; border-radius: 5px 5px 0 0; background: linear-gradient(#d7d3d8, #efeeef 75%); box-shadow: 0 0 0 1px #bbb8; padding-left: 4px; display: flex; }
.ic { width: 68px; height: 80px; }
.petals { isolation: isolate; }
.petals rect { mix-blend-mode: multiply; }
.dsep { width: 1px; height: 60px; background: #b5b3b6; margin: 10px 0 0 15px; }
.trash { margin: 10px 0 0 25px; }
```
